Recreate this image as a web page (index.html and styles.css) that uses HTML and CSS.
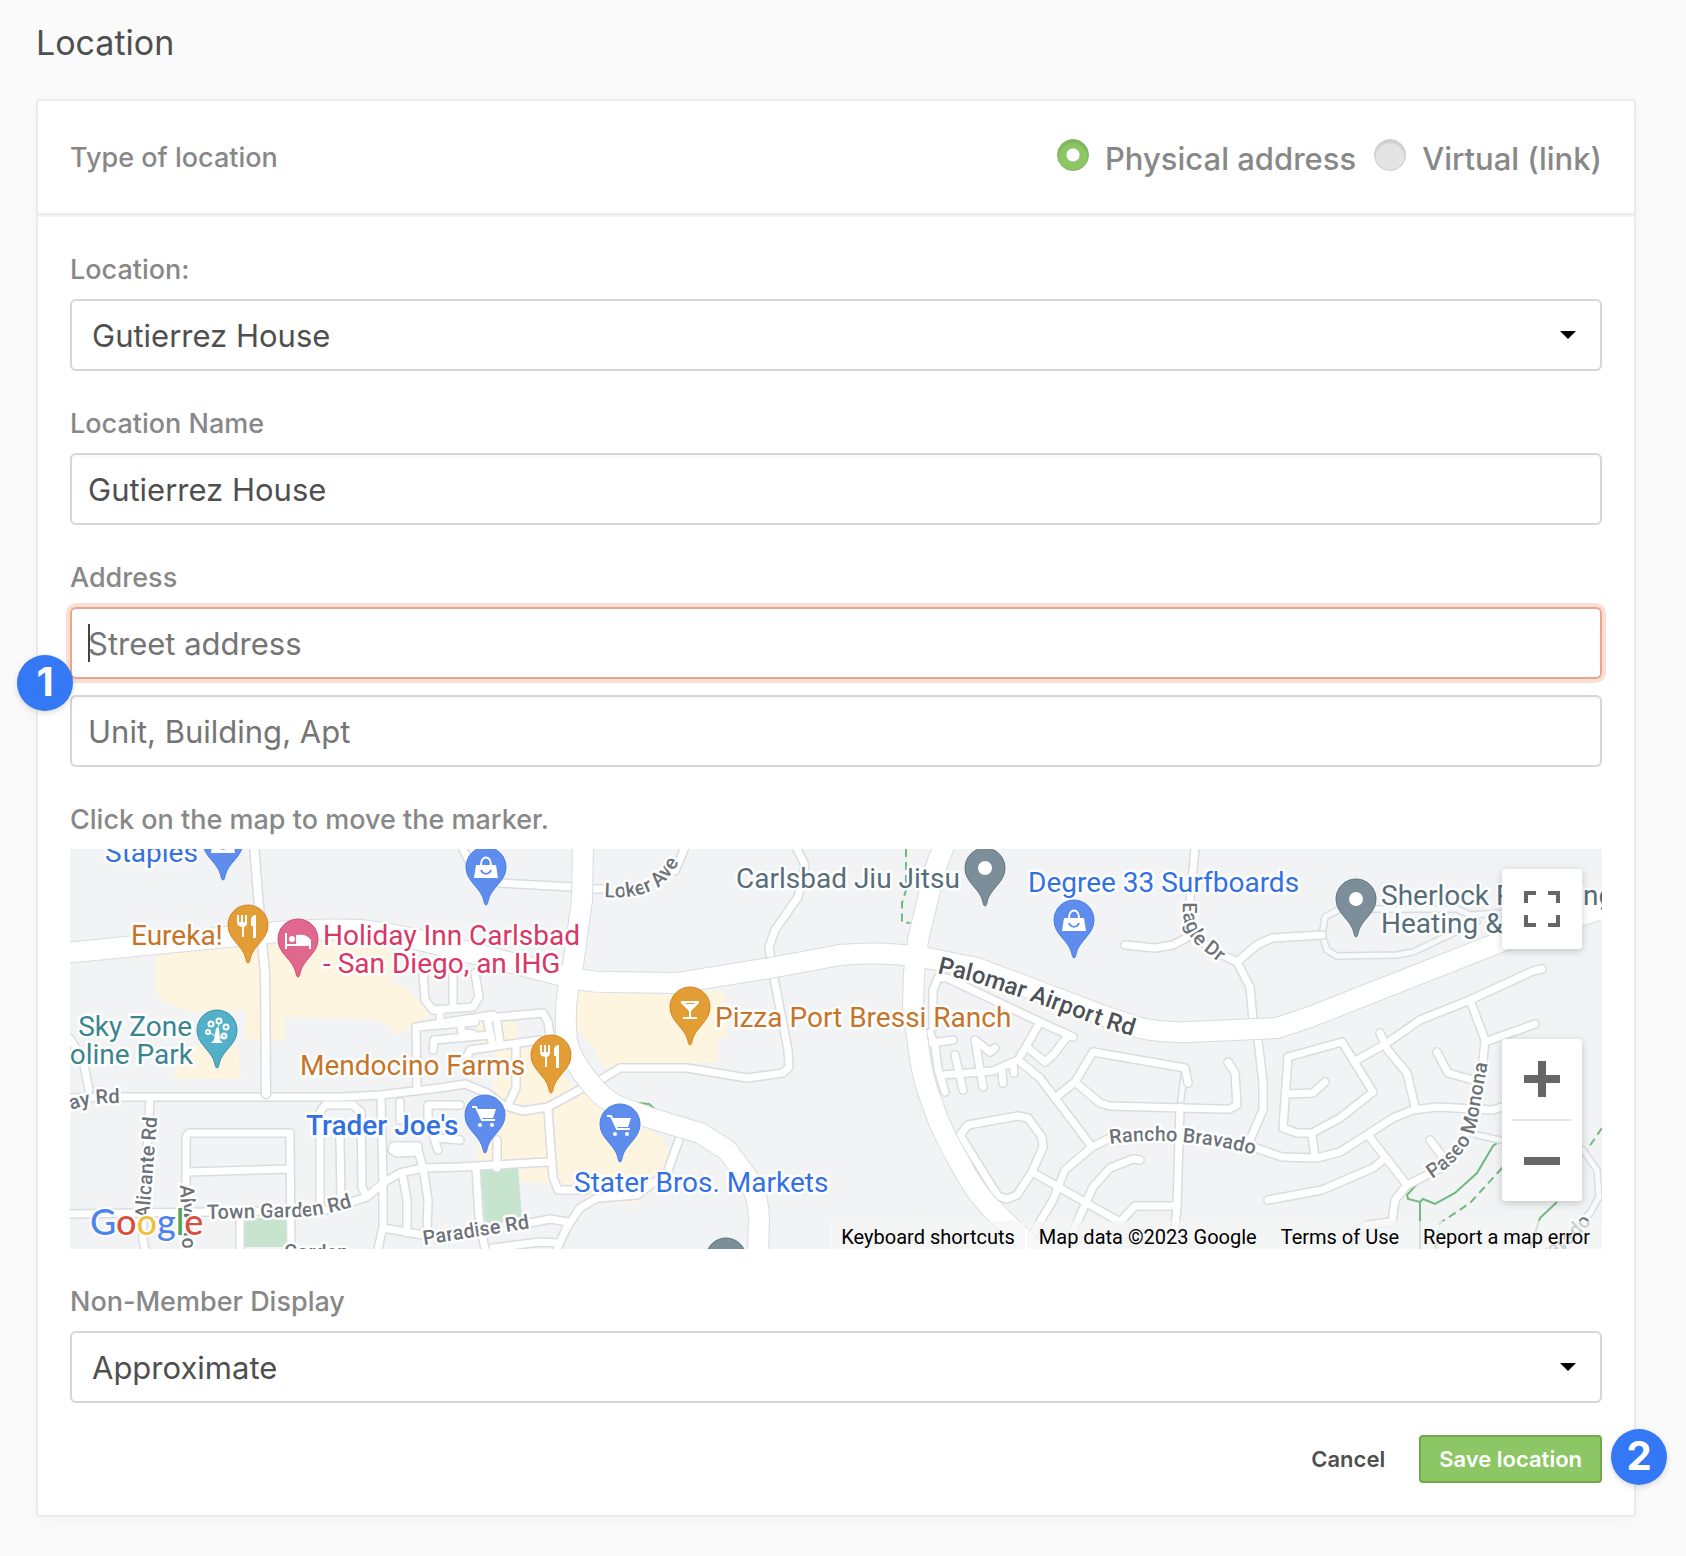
FILE: index.html
```html
<!DOCTYPE html>
<html lang="en">
  <head>
    <meta charset="UTF-8" />
    <meta name="viewport" content="width=device-width, initial-scale=1.0" />
    <title>Location</title>
    <link rel="stylesheet" href="styles.css">
  </head>
  <body>
    <h1 class="page-title">Location</h1>

    <form class="card">
      <div class="card-header" role="radiogroup" aria-labelledby="typeLabel">
        <span class="label" id="typeLabel">Type of location</span>
        <div class="radio-group">
          <label class="radio"><input type="radio" name="type" value="physical" checked /> Physical address</label>
          <label class="radio"><input type="radio" name="type" value="virtual" /> Virtual (link)</label>
        </div>
      </div>

      <div class="card-body">
        <div class="field">
          <label class="label" for="location">Location:</label>
          <div class="select-wrap">
            <select class="control" id="location">
              <option>Gutierrez House</option>
            </select>
          </div>
        </div>

        <div class="field">
          <label class="label" for="locationName">Location Name</label>
          <input class="control" id="locationName" type="text" value="Gutierrez House" />
        </div>

        <div class="field">
          <label class="label" for="street">Address</label>
          <div class="address-lines">
            <input class="control is-focused" id="street" type="text" placeholder="Street address" />
            <input class="control" id="unit" type="text" placeholder="Unit, Building, Apt" aria-label="Unit, Building, Apt" />
            <span class="step step-address">1</span>
          </div>
        </div>

        <div class="field">
          <span class="label">Click on the map to move the marker.</span>
          <div class="map">
            <svg class="map-canvas" viewBox="0 0 1532 400" preserveAspectRatio="xMidYMid slice">
              <defs>
                <g id="streets">
                  <path d="M393 0L405 24M430 34L503 38M520 40H533M605 22L616 -4" />
                  <path d="M727 0L735 16L728 48L705 81L699 98L701 111M704 129L718 201L719 218L713 224L677 229L617 219H550L527 233" />
                  <path d="M513 239L478 258L453 262L433 256L417 244L395 235L370 239L310 246L273 248H50L0 249" />
                  <path d="M0 190L7 201L13 211L19 241M80 249L79 268L73 371V391L75 400" />
                  <path d="M116 400V288L119 284H220L221 400M116 323L220 320" />
                  <path d="M0 365L137 363L257 361L297 348L313 334L330 324L353 319L390 318L477 313M170 371V400" />
                  <path d="M250 354V263L255 256H283L291 263L292 338L296 347M270 288L271 354" />
                  <path d="M311 249L313 334V378L308 400M313 379L353 386M333 329L337 351V384M348 301L353 319L358 351L357 383" />
                  <path d="M390 256H358V271L368 301M367 289L390 291M370 256H383M348 297H323L322 301L327 304L348 303M330 253V271" />
                  <path d="M347 238L346 178L390 171L423 166M363 201L364 191L420 186M353 124L355 151L363 161L403 158L409 148L405 124M383 124V158M370 161V174M346 178L405 173M390 174L392 184L403 185" />
                  <path d="M423 198L417 169L473 164L478 173L480 188M427 173L430 194M397 208L400 201L470 191M446 198V239L438 256" />
                  <path d="M427 319V291M406 319L409 368L415 400M478 261L483 328L488 341H517M610 288L597 324L583 334L567 346L527 349L510 359L497 378L487 400M460 374L480 370L498 373M423 399L470 393L488 394" />
                  <path d="M863 178V141L868 129H877L970 173L1003 188M970 173L957 196L948 211L923 222L872 226M997 188L983 206L975 213L958 199" />
                  <path d="M860 184L865 196L868 220L875 243M862 194L883 191M885 206L893 241M905 191L913 238M905 191L920 203L925 199M932 223L933 234M943 216L944 224" />
                  <path d="M948 211L970 229L985 249L1022 298L995 321L983 351L967 378L958 395M1022 298L1040 289Q1110 278 1183 298L1212 308L1247 309L1270 303L1323 269L1343 261L1367 258L1423 261L1432 258" />
                  <path d="M985 249L1005 233L1023 203L1115 219L1118 234M1005 233L1030 254L1040 257L1150 260H1160L1167 256L1165 224L1158 213M1110 258L1107 358L1105 378V400" />
                  <path d="M890 286L898 276L948 267L958 269L972 288L973 298L962 323L947 346L937 350L928 347ZM962 323L1050 373L1065 357H1107M1070 311L1063 310L1040 319L1023 338L1005 378L995 400" />
                  <path d="M1125 0L1120 51L1120 80L1140 100L1167 113L1180 138L1183 171M1188 191L1193 234V261L1180 291M1055 96L1085 99L1103 96L1118 88M1167 113L1187 96L1202 89L1252 86" />
                  <path d="M1472 120L1463 122L1400 151L1350 171L1317 194L1287 211M1400 151L1415 191L1413 211M1465 175L1415 193M1310 184L1317 200L1337 224L1345 258" />
                  <path d="M1218 208L1272 193L1303 243L1270 269L1242 284H1227L1213 279ZM1218 245L1243 244L1255 233M1242 286L1245 308M1367 203L1378 224L1403 231" />
                  <path d="M1298 286L1337 336M1313 311L1303 319L1252 341L1198 351M1360 291L1373 308M1413 211L1403 274L1380 314L1353 328L1337 336L1325 351L1322 373L1297 376L1273 391" />
                </g>
                <g id="lanes">
                  <path d="M1252 86L1255 68L1270 60H1387L1400 66L1432 64M1252 86L1257 101L1267 107L1327 106L1343 103L1407 73" />
                  <path d="M1407 286L1430 291M1513 301L1527 321L1529 348L1520 364L1500 385" />
                  <path d="M1115 219L1110 258" />
                </g>
                <g id="eureka"><path d="M184 -5L190 71L195 124L196 245" /></g>
                <g id="arterials">
                  <path d="M-5 104L197 84Q245 79 290 81Q340 87 390 101L490 126Q515 133 537 133L607 134L700 119L770 106Q813 102 857 109L907 119L1037 168L1070 179Q1095 184 1120 183L1207 179L1240 168L1433 92L1540 57" />
                  <path d="M513 -5L512 51L503 116L498 141Q494 165 497 191Q500 210 522 236Q535 252 550 258L577 268L610 278L630 284L657 301L677 328Q688 345 689 368L688 405" />
                  <path d="M875 -5Q862 25 860 41L848 91L844 124L843 158L848 195Q852 230 862 254Q872 284 890 314Q903 340 920 358L965 402" />
                </g>
                <path id="pin" d="M0 38C-1 38-2 36-2 34C-5 20-20 15-20 0A20 20 0 0 1 20 0C20 15 5 20 2 34C2 36 1 38 0 38Z" />
                <g id="fork" fill="#fff">
                  <path d="M-11-10h2v7h2v-7h2v7h2v-7h2v8c0 2-1 3-3 4v10h-2v-10c-3-1-5-2-5-4z" />
                  <path d="M3 1v-5c0-4 2-6 5-6v23h-3v-12z" />
                </g>
                <g id="bag">
                  <path fill="#fff" d="M-10-2H10L12 11H-12Z" />
                  <path fill="none" stroke="#fff" stroke-width="2" d="M-5-2C-5-12 5-12 5-2" />
                  <path fill="none" stroke="#5e8ded" stroke-width="2" d="M-5 3C-3 8 3 8 5 3" />
                </g>
                <g id="cart">
                  <path fill="none" stroke="#fff" stroke-width="2" d="M-13-8h4L-3 5H10" />
                  <path fill="#fff" d="M-8-6H11L8 3H-4Z" />
                  <circle fill="#fff" cx="-5" cy="10" r="2" />
                  <circle fill="#fff" cx="7" cy="10" r="2" />
                </g>
              </defs>

              <rect width="1532" height="400" fill="#f1f3f4" />

              <g fill="#fdf5e0">
                <path d="M86 106L190 96L196 191H176V161L123 163L95 154L85 141Z" />
                <path d="M197 94L320 91L322 133L337 139L362 164L328 186L310 171L215 168V191H193Z" />
                <path d="M123 196H168L171 230H104L107 212Z" />
                <path d="M508 141L537 144L600 145L652 141L657 158V188H648V214H592L535 221L523 198L505 180Z" />
                <path d="M407 173L422 171L424 194L408 194ZM432 173H447V191H433Z" />
                <path d="M425 201L463 198L505 238L477 254L443 256L423 241Z" />
                <path d="M407 260L477 261L480 308L408 313ZM450 319L478 318L480 334L450 333Z" />
                <path d="M485 259L513 244L537 261L570 276L593 288L599 304L593 321L577 338L567 354L527 351L488 338Z" />
              </g>
              <path fill="#c7e4ce" d="M411 320L448 319L452 368L415 378ZM175 369H217V398H174Z" />
              <path class="trail" d="M552 250L558 253L579 255L587 262M1427 294L1423 297L1407 324L1385 344L1365 355L1353 350L1350 353L1338 350L1337 346L1347 335M1350 353V400M1487 353L1470 369L1460 400" />
              <path class="trail trail-dashed" d="M836 0V41L832 54V73L840 74M1532 279L1510 311L1432 319L1400 354L1370 374L1365 400" />

              <use href="#lanes" class="lanes-edge" />
              <use href="#lanes" class="lanes" />
              <use href="#streets" class="streets-edge" />
              <use href="#streets" class="streets" />
              <use href="#eureka" class="eureka-edge" />
              <use href="#arterials" class="arterials-edge" />
              <use href="#eureka" class="eureka" />
              <use href="#arterials" class="arterials" />

              <!-- street names follow the roads -->
              <path id="lokerAve" fill="none" d="M534 48Q572 51 592 35Q606 22 618 -4" />
              <path id="palomar" fill="none" d="M867 124L900 132L955 150L1033 178L1075 191" />
              <path id="eagleDr" fill="none" d="M1113 53Q1111 80 1128 97L1165 126" />
              <path id="rancho" fill="none" d="M1040 295Q1110 285 1190 307" />
              <path id="paseo" fill="none" d="M1362 330Q1400 305 1407 274L1421 196" />
              <path id="alicante" fill="none" d="M79 370L88 258" />
              <path id="alverton" fill="none" d="M110 336L114 440" />
              <path id="bayRd" fill="none" d="M-60 284L0 262Q15 254 50 254" />
              <path id="townGarden" fill="none" d="M137 370L230 368Q262 366 300 352" />
              <path id="paradise" fill="none" d="M354 396L480 376" />
              <path id="bravado" fill="none" d="M1452 424L1496 400L1522 373" />
              <g class="street-names">
                <text><textPath href="#lokerAve">Loker Ave</textPath></text>
                <text class="street-major"><textPath href="#palomar">Palomar Airport Rd</textPath></text>
                <text><textPath href="#eagleDr">Eagle Dr</textPath></text>
                <text><textPath href="#rancho">Rancho Bravado</textPath></text>
                <text><textPath href="#paseo">Paseo Monona</textPath></text>
                <text><textPath href="#alicante">Alicante Rd</textPath></text>
                <text><textPath href="#alverton">Alverton</textPath></text>
                <text text-anchor="end"><textPath href="#bayRd" startOffset="100%">Gateway Rd</textPath></text>
                <text><textPath href="#townGarden">Town Garden Rd</textPath></text>
                <text><textPath href="#paradise">Paradise Rd</textPath></text>
                <text x="214" y="410">Garden</text>
                <text text-anchor="end"><textPath href="#bravado" startOffset="100%">Bravado</textPath></text>
              </g>

              <g class="places">
                <g class="shop">
                  <text x="35" y="13">Staples</text>
                  <text x="958" y="43">Degree 33 Surfboards</text>
                  <text x="236" y="286" class="featured">Trader Joe's</text>
                  <text x="504" y="343">Stater Bros. Markets</text>
                </g>
                <g class="food">
                  <text x="61" y="96">Eureka!</text>
                  <text x="645" y="178">Pizza Port Bressi Ranch</text>
                  <text x="230" y="226">Mendocino Farms</text>
                </g>
                <g class="hotel">
                  <text x="253" y="96">Holiday Inn Carlsbad</text>
                  <text x="253" y="124">- San Diego, an IHG</text>
                </g>
                <g class="park" text-anchor="end">
                  <text x="122" y="187">Sky Zone</text>
                  <text x="123" y="215">Trampoline Park</text>
                </g>
                <g class="business">
                  <text x="666" y="39">Carlsbad Jiu Jitsu</text>
                  <text x="1311" y="56">Sherlock Plumbing</text>
                  <text x="1311" y="84">Heating &amp;</text>
                </g>
              </g>

              <g transform="translate(153 -7)">
                <use href="#pin" class="pin-shop" />
                <use href="#bag" />
              </g>
              <g transform="translate(416 18)">
                <use href="#pin" class="pin-shop" />
                <use href="#bag" />
              </g>
              <g transform="translate(1004 71)">
                <use href="#pin" class="pin-shop" />
                <use href="#bag" />
              </g>
              <g transform="translate(415 266)">
                <use href="#pin" class="pin-shop" />
                <use href="#cart" />
              </g>
              <g transform="translate(550 275)">
                <use href="#pin" class="pin-shop" />
                <use href="#cart" />
              </g>
              <g transform="translate(178 76)">
                <use href="#pin" class="pin-food" />
                <use href="#fork" />
              </g>
              <g transform="translate(481 206)">
                <use href="#pin" class="pin-food" />
                <use href="#fork" />
              </g>
              <g transform="translate(620 158)">
                <use href="#pin" class="pin-food" />
                <path fill="#fff" fill-rule="evenodd" d="M-9-6H9V-4L1 4V10H7V12H-7V10H-1V4L-9-4ZM-5-4L-4-3H4L5-4Z" />
              </g>
              <g transform="translate(228 90)">
                <use href="#pin" class="pin-hotel" />
                <path fill="#fff" d="M-13-6h2V5H-2V-4C4-5 9-4 11-1L13 1V10H11V7H-11V10H-13Z" />
                <circle fill="#fff" cx="-6" cy="0" r="3" />
              </g>
              <g transform="translate(147 181)">
                <use href="#pin" class="pin-park" />
                <path fill="#fff" d="M-1-2H2L3 10L6 13H-6L-3 10Z" />
                <path fill="none" stroke="#fff" d="M-7 3L-1 6M8 6L3 8M0 0L2-6" />
                <g fill="none" stroke="#fff" stroke-width="2">
                  <circle cx="-9" cy="2" r="2" />
                  <circle cx="-6" cy="-6" r="2.5" />
                  <circle cx="2" cy="-9" r="2.5" />
                  <circle cx="9" cy="-3" r="2.5" />
                  <circle cx="7" cy="6" r="2.5" />
                </g>
              </g>
              <g transform="translate(656 409)">
                <use href="#pin" class="pin-business" />
              </g>
              <g transform="translate(915 19)">
                <use href="#pin" class="pin-business" />
                <circle fill="#fff" r="7" />
              </g>
              <g transform="translate(1286 50)">
                <use href="#pin" class="pin-business" />
                <circle fill="#fff" r="7" />
              </g>
            </svg>

            <a class="map-logo" href="#" aria-label="Google"><span class="g-blue">G</span><span class="g-red">o</span><span class="g-yellow">o</span><span class="g-blue">g</span><span class="g-green">l</span><span class="g-red">e</span></a>

            <button class="map-button map-fullscreen" type="button" aria-label="Toggle fullscreen view">
              <svg width="36" height="36" viewBox="0 0 36 36" fill="none" stroke="#666" stroke-width="4">
                <path d="M2 12V2H12M24 2H34V12M34 24V34H24M12 34H2V24" />
              </svg>
            </button>

            <div class="map-zoom">
              <button class="map-button" type="button" aria-label="Zoom in">
                <svg width="36" height="36" viewBox="0 0 36 36" fill="#666"><path d="M14 0H22V14H36V22H22V36H14V22H0V14H14Z" /></svg>
              </button>
              <button class="map-button" type="button" aria-label="Zoom out">
                <svg width="36" height="36" viewBox="0 0 36 36" fill="#666"><path d="M0 14H36V22H0Z" /></svg>
              </button>
            </div>

            <div class="map-footer">
              <button type="button">Keyboard shortcuts</button>
              <div class="map-credits">
                <span>Map data ©2023 Google</span>
                <a href="#">Terms of Use</a>
                <a href="#">Report a map error</a>
              </div>
            </div>
          </div>
        </div>

        <div class="field">
          <label class="label" for="display">Non-Member Display</label>
          <div class="select-wrap">
            <select class="control" id="display">
              <option>Approximate</option>
            </select>
          </div>
        </div>

        <div class="actions">
          <button class="btn" type="button">Cancel</button>
          <button class="btn btn-save" type="submit">Save location</button>
          <span class="step step-save">2</span>
        </div>
      </div>
    </form>
  </body>
</html>
```

FILE: styles.css
```css
* {
  box-sizing: border-box;
}
body {
  margin: 0;
  padding: 20px 50px 36px 36px;
  background-color: #fafafa;
  color: #4f4f4f;
  font-family: Inter, "Liberation Sans", sans-serif;
}
button,
input,
select {
  font-family: inherit;
  color: inherit;
}
.page-title {
  margin: 0 0 33px;
  font-size: 34px;
  font-weight: 400;
  line-height: 46px;
}
.card {
  background-color: #fff;
  border: 2px solid #ebebeb;
  border-radius: 4px;
  box-shadow: 0 4px 16px rgba(0, 0, 0, 0.03);
}
.card-header {
  display: flex;
  align-items: center;
  justify-content: space-between;
  min-height: 116px;
  padding: 0 32px;
  border-bottom: 2px solid #f3f3f3;
  box-shadow: inset 0 -2px 0 #ebebeb;
}
.label {
  color: #888;
  font-size: 27px;
  font-weight: 500;
  line-height: 34px;
}
.radio-group {
  display: flex;
  gap: 18px;
}
.radio {
  display: flex;
  align-items: center;
  gap: 16px;
  color: #888;
  font-size: 31px;
  font-weight: 500;
}
.radio input {
  appearance: none;
  width: 32px;
  height: 32px;
  margin: 0 0 6px;
  border: 1px solid #ccc;
  border-radius: 50%;
  background-color: #e4e4e4;
  box-shadow: inset 0 3px 2px rgba(0, 0, 0, 0.1);
}
.radio input:checked {
  border-color: #83b562;
  background: #8dc665 radial-gradient(circle, #fff 6px, transparent 7px);
}
.card-body {
  display: flex;
  flex-direction: column;
  gap: 36px;
  padding: 36px 32px 32px;
}
.field {
  display: flex;
  flex-direction: column;
  gap: 12px;
}
.control {
  display: block;
  width: 100%;
  height: 72px;
  padding: 0 16px;
  border: 2px solid #d6d6d6;
  border-radius: 6px;
  background-color: #fff;
  box-shadow: inset 0 2px 2px rgba(0, 0, 0, 0.03);
  font-size: 31px;
}
.control::placeholder {
  color: #757575;
  opacity: 1;
}
.control.is-focused {
  border-color: #eca58b;
  background-image: linear-gradient(#444, #444);
  background-position: 16px center;
  background-size: 2px 38px;
  background-repeat: no-repeat;
  box-shadow: 0 0 0 4px #fadfd6;
}
.select-wrap {
  position: relative;
}
.select-wrap select {
  appearance: none;
  padding: 0 20px;
  box-shadow: none;
}
.select-wrap::after {
  content: "";
  position: absolute;
  top: 32px;
  right: 26px;
  border: 8px solid transparent;
  border-top-color: #000;
  border-bottom: 0;
  pointer-events: none;
}
.address-lines {
  position: relative;
  display: flex;
  flex-direction: column;
  gap: 16px;
}

/* numbered steps */
.step {
  position: absolute;
  width: 56px;
  height: 56px;
  border-radius: 50%;
  background-color: #3478f6;
  box-shadow: 0 2px 6px rgba(0, 0, 0, 0.15);
  color: #fff;
  font-size: 40px;
  font-weight: 700;
  line-height: 54px;
  text-align: center;
}
.step-address {
  top: 48px;
  left: -53px;
}
.step-save {
  top: -6px;
  right: -65px;
}

/* map */
.map {
  position: relative;
  height: 400px;
  overflow: hidden;
  font-family: Roboto, "Liberation Sans", sans-serif;
}
.map-canvas {
  display: block;
  width: 100%;
  height: 100%;
}
.streets,
.streets-edge,
.lanes,
.lanes-edge,
.eureka,
.eureka-edge,
.arterials,
.arterials-edge {
  fill: none;
  stroke: #fff;
  stroke-linecap: round;
  stroke-linejoin: round;
}
.streets-edge,
.lanes-edge,
.eureka-edge,
.arterials-edge {
  stroke: #dadce0;
}
.streets {
  stroke-width: 7px;
}
.streets-edge {
  stroke-width: 10px;
}
.lanes {
  stroke: #f8f9fa;
  stroke-width: 5px;
}
.lanes-edge {
  stroke-width: 8px;
}
.eureka {
  stroke-width: 8px;
}
.eureka-edge {
  stroke-width: 11px;
}
.arterials {
  stroke-width: 20px;
}
.arterials-edge {
  stroke-width: 22px;
}
.trail {
  fill: none;
  stroke: #70b980;
  stroke-width: 2px;
}
.trail-dashed {
  stroke-dasharray: 8 5;
}
.street-names text,
.places text {
  stroke: #fff;
  stroke-width: 5px;
  stroke-linejoin: round;
  paint-order: stroke;
}
.street-names {
  fill: #6b7278;
  font-size: 20px;
  font-weight: 500;
}
.street-names .street-major {
  fill: #4c5156;
  font-size: 24px;
}
.places {
  font-size: 28px;
}
.featured {
  font-weight: 500;
}
.shop {
  fill: #3371e3;
}
.food {
  fill: #c87428;
}
.hotel {
  fill: #d93765;
}
.park {
  fill: #3a858f;
}
.business {
  fill: #566e7a;
}
.pin-shop {
  fill: #5e8ded;
  stroke: #4a80e8;
}
.pin-food {
  fill: #e39d35;
  stroke: #d58429;
}
.pin-hotel {
  fill: #e0688f;
  stroke: #d54a79;
}
.pin-park {
  fill: #52b0c8;
  stroke: #41909f;
}
.pin-business {
  fill: #7c8e9a;
  stroke: #5f7682;
}
.map-logo {
  position: absolute;
  bottom: 6px;
  left: 20px;
  font-family: Lato, sans-serif;
  font-size: 36px;
  font-weight: 500;
  line-height: 44px;
  text-decoration: none;
  -webkit-text-stroke: 4px #fff;
  paint-order: stroke fill;
}
.g-blue {
  color: #4f83ee;
}
.g-red {
  color: #d94f3d;
}
.g-yellow {
  color: #efbf3e;
}
.g-green {
  color: #4ea556;
}
.map-button {
  display: flex;
  align-items: center;
  justify-content: center;
  width: 80px;
  height: 80px;
  padding: 0;
  border: 0;
  border-radius: 4px;
  background-color: #fff;
  cursor: pointer;
}
.map-fullscreen {
  position: absolute;
  top: 20px;
  right: 20px;
  box-shadow: 0 2px 8px rgba(0, 0, 0, 0.2);
}
.map-zoom {
  position: absolute;
  right: 20px;
  bottom: 48px;
  border-radius: 4px;
  background-color: #fff;
  box-shadow: 0 2px 8px rgba(0, 0, 0, 0.2);
}
.map-zoom .map-button + .map-button {
  margin-top: 2px;
}
.map-zoom .map-button + .map-button::before {
  content: "";
  position: absolute;
  top: 80px;
  left: 10px;
  right: 10px;
  height: 2px;
  background-color: #e6e6e6;
}
.map-footer {
  position: absolute;
  right: 0;
  bottom: 0;
  display: flex;
  gap: 2px;
  color: #000;
  font-size: 20px;
  line-height: 24px;
}
.map-footer button,
.map-credits {
  padding: 4px 0 0;
  background-color: rgba(245, 245, 245, 0.7);
}
.map-credits {
  display: flex;
}
.map-footer button {
  padding: 4px 10px 0 12px;
  border: 0;
  font-size: 20px;
  line-height: 24px;
}
.map-credits span,
.map-credits a {
  padding: 0 12px;
  color: #000;
  text-decoration: none;
}

.actions {
  position: relative;
  display: flex;
  justify-content: flex-end;
  gap: 14px;
  margin-top: -4px;
}
.btn {
  height: 48px;
  padding: 0 18px;
  border: 2px solid transparent;
  border-radius: 4px;
  background-color: transparent;
  font-size: 22px;
  font-weight: 600;
  cursor: pointer;
}
.btn-save {
  border-color: #72a84a;
  background-color: #8dc665;
  color: #fff;
}
```
